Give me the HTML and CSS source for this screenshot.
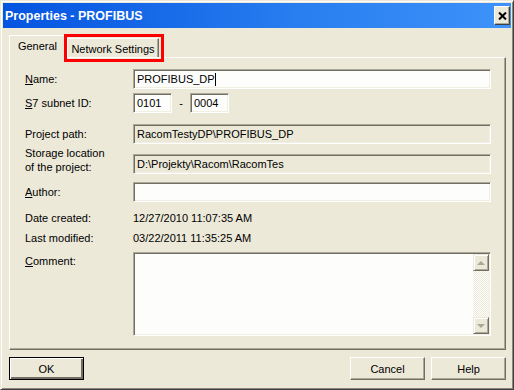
FILE: index.html
```html
<!DOCTYPE html>
<html lang="en">
    <head>
        <meta charset="UTF-8" />
        <title>Properties - PROFIBUS</title>
        <link rel="stylesheet" href="styles.css">
    </head>

    <body>
        <div class="window">
            <div class="title_bar">
                <span class="title">Properties - PROFIBUS</span>
                <span class="close_btn">
                    <svg width="9" height="8" viewBox="0 0 9 8">
                        <path d="M1 0.5 L8 7.5 M8 0.5 L1 7.5" stroke="#000" stroke-width="2" fill="none" />
                    </svg>
                </span>
            </div>

            <div class="content">
                <div class="tabs">
                    <span class="tab on">General</span>
                    <span class="tab">Network Settings<i class="mark"></i></span>
                </div>

                <div class="panel">
                    <div class="row">
                        <label class="lbl"><u>N</u>ame:</label>
                        <div class="field wide">PROFIBUS_DP<span class="caret"></span></div>
                    </div>
                    <div class="row gap4">
                        <label class="lbl"><u>S</u>7 subnet ID:</label>
                        <div class="field short">0101</div>
                        <span class="dash">-</span>
                        <div class="field short">0004</div>
                    </div>
                    <div class="row gap11">
                        <label class="lbl">Project path:</label>
                        <div class="field wide off">RacomTestyDP\PROFIBUS_DP</div>
                    </div>
                    <div class="row two_line gap2">
                        <label class="lbl">Storage location<br>of the project:</label>
                        <div class="field wide off">D:\Projekty\Racom\RacomTes</div>
                    </div>
                    <div class="row gap8">
                        <label class="lbl"><u>A</u>uthor:</label>
                        <div class="field wide"></div>
                    </div>
                    <div class="row info gap8">
                        <label class="lbl">Date created:</label>
                        <span>12/27/2010 11:07:35 AM</span>
                    </div>
                    <div class="row info gap4">
                        <label class="lbl">Last modified:</label>
                        <span>03/22/2011 11:35:25 AM</span>
                    </div>
                    <div class="row memo_row gap6">
                        <label class="lbl"><u>C</u>omment:</label>
                        <div class="memo">
                            <div class="memo_text"></div>
                            <div class="scroll">
                                <span class="sbtn up"></span>
                                <span class="track"></span>
                                <span class="sbtn down"></span>
                            </div>
                        </div>
                    </div>
                </div>

                <div class="buttons">
                    <button class="btn default">OK</button>
                    <button class="btn push">Cancel</button>
                    <button class="btn">Help</button>
                </div>
            </div>
        </div>
    </body>
</html>
```

FILE: styles.css
```css
* {
    box-sizing: border-box;
    padding: 0;
    margin: 0;
}
body {
    width: 514px;
    height: 390px;
    overflow: hidden;
    font-family: "Liberation Sans", Arial, sans-serif;
    font-size: 11px;
    color: #000;
}
.window {
    width: 514px;
    height: 390px;
    display: flex;
    flex-direction: column;
    padding: 2px;
    background-color: #ece9d8;
    border: 1px solid;
    border-color: #ece9d8 #404040 #404040 #ece9d8;
    box-shadow: inset 1px 1px #fff, inset -1px -1px #8a887c;
}
.title_bar {
    height: 25px;
    display: flex;
    align-items: center;
    justify-content: space-between;
    padding: 0 1px 0 2px;
    background: linear-gradient(to right, #0454e0, #2a7ff0 60%, #3d92fb);
}
.title {
    color: #fff;
    font-weight: bold;
    font-size: 12.5px;
}
.close_btn {
    width: 16px;
    height: 19px;
    display: flex;
    justify-content: center;
    align-items: center;
    background-color: #ece9d8;
    border: 1px solid;
    border-color: #fff #404040 #404040 #fff;
    box-shadow: inset -1px -1px #aca899;
}
.content {
    flex: 1;
    padding: 7px 5px 0 6px;
}
.tabs {
    height: 23px;
    display: flex;
    align-items: flex-end;
    margin-bottom: -1px;
    position: relative;
    z-index: 1;
}
.tab {
    position: relative;
    height: 19px;
    width: 92px;
    margin: 0 0 1px 1px;
    display: flex;
    justify-content: center;
    align-items: center;
    padding-top: 1px;
    background-color: #ece9d8;
    border: 1px solid;
    border-bottom: none;
    border-color: #fff #716f64 #ece9d8 #fff;
    box-shadow: inset -1px 0 #aca899;
}
.tab.on {
    height: 23px;
    width: 57px;
    margin: 0;
    padding: 0 0 2px;
}
.mark {
    position: absolute;
    left: -4px;
    top: -5px;
    right: -6px;
    bottom: -5px;
    border: 3px solid #f00;
}
.panel {
    height: 293px;
    padding: 11px 14px 0 15px;
    border: 1px solid;
    border-color: #fff #716f64 #716f64 #fff;
    box-shadow: inset -1px -1px #aca899;
}
.row {
    display: flex;
    align-items: center;
    height: 20px;
}
.gap2 { margin-top: 2px; }
.gap4 { margin-top: 4px; }
.gap6 { margin-top: 6px; }
.gap8 { margin-top: 8px; }
.gap11 { margin-top: 11px; }
.lbl {
    width: 108px;
    flex-shrink: 0;
    line-height: 14px;
}
.two_line {
    height: 28px;
    align-items: flex-end;
}
.info {
    height: 16px;
}
.field {
    height: 20px;
    display: flex;
    align-items: center;
    padding: 0 3px;
    white-space: nowrap;
    overflow: hidden;
    background-color: #fdfdfb;
    border: 1px solid;
    border-color: #aca899 #fff #fff #aca899;
    box-shadow: inset 1px 1px #716f64, inset -1px -1px #f1efe2;
}
.field.wide {
    width: 358px;
}
.field.short {
    width: 39px;
}
.field.off {
    background-color: #ece9d8;
}
.caret {
    width: 1px;
    height: 13px;
    background-color: #000;
}
.dash {
    width: 18px;
    text-align: center;
}
.memo_row {
    height: 84px;
    align-items: flex-start;
}
.memo_row .lbl {
    padding-top: 2px;
}
.memo {
    width: 358px;
    height: 84px;
    display: flex;
    background-color: #fdfdfb;
    border: 1px solid;
    border-color: #aca899 #fff #fff #aca899;
    box-shadow: inset 1px 1px #716f64, inset -1px -1px #f1efe2;
    padding: 1px;
}
.memo_text {
    flex: 1;
}
.scroll {
    width: 16px;
    display: flex;
    flex-direction: column;
}
.track {
    flex: 1;
    background: repeating-conic-gradient(#fff 0 25%, #ece9d8 0 50%) 0 0 / 2px 2px;
}
.sbtn {
    height: 17px;
    display: flex;
    justify-content: center;
    align-items: center;
    background-color: #ece9d8;
    border: 1px solid;
    border-color: #ece9d8 #716f64 #716f64 #ece9d8;
    box-shadow: inset 1px 1px #fff, inset -1px -1px #aca899;
}
.sbtn::after {
    content: "";
    border-left: 4px solid transparent;
    border-right: 4px solid transparent;
}
.sbtn.up::after {
    border-bottom: 4px solid #aca899;
}
.sbtn.down::after {
    border-top: 4px solid #aca899;
}
.buttons {
    display: flex;
    margin-top: 7px;
}
.btn {
    width: 75px;
    height: 23px;
    font-family: inherit;
    font-size: 11px;
    color: #000;
    background-color: #ece9d8;
    border: 1px solid;
    border-color: #fff #716f64 #716f64 #fff;
    box-shadow: inset -1px -1px #aca899;
}
.btn.default {
    border: 1px solid #000;
    box-shadow: inset 1px 1px #fff, inset -2px -2px #716f64;
}
.btn.push {
    margin-left: auto;
    margin-right: 6px;
}
```
